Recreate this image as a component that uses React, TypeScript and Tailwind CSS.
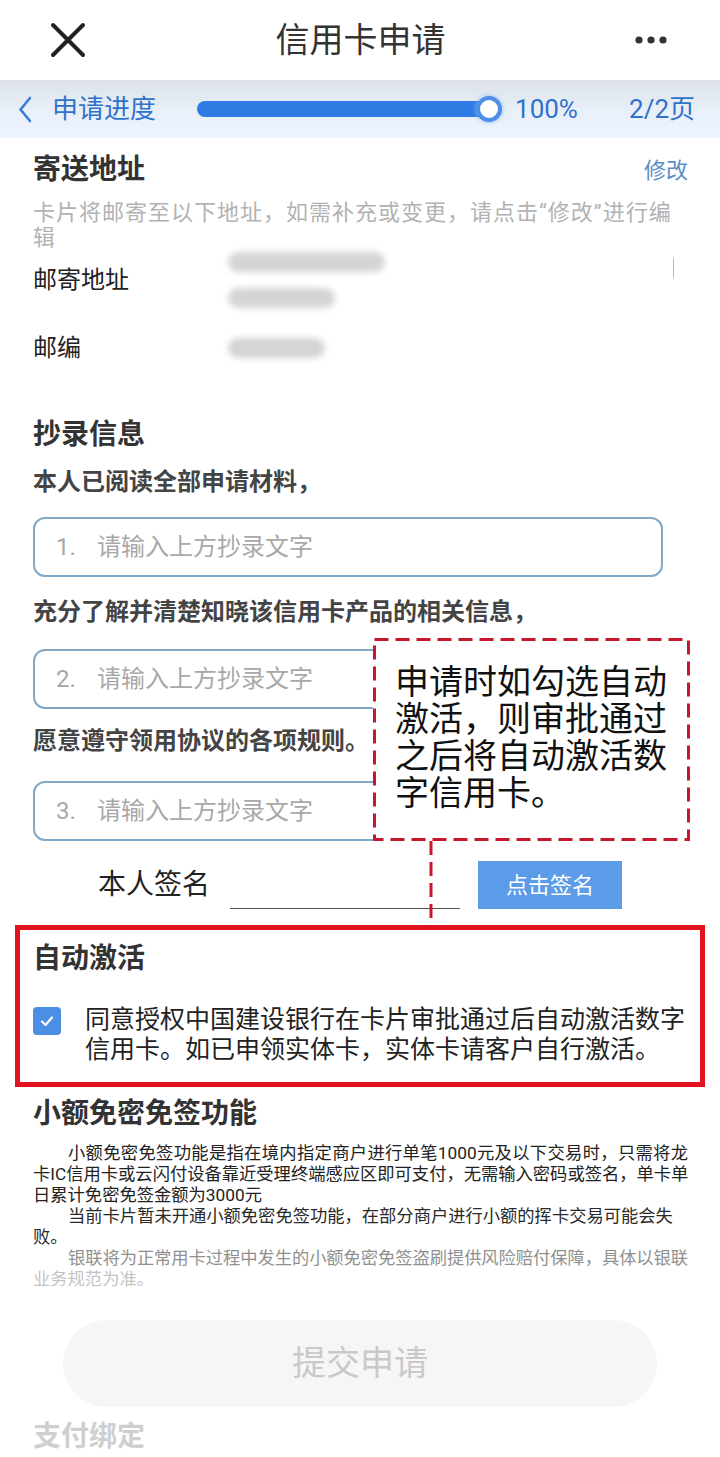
import React from "react";

const font = { fontFamily: 'Roboto, "Noto Sans CJK SC", sans-serif' };

function Blur({ w }: { w: number }) {
  return <div className="h-[20px] rounded-full bg-[#d4d4d4] blur-[3px]" style={{ width: w }} />;
}

function CopyInput({ n }: { n: number }) {
  return (
    <div className="flex h-[60px] w-[630px] items-center rounded-[12px] border-2 border-[#7fa8c9] pl-[21px] text-[24px] text-[#a8a8a8]">
      <span className="w-[41px]">{n}.</span>
      <span>请输入上方抄录文字</span>
    </div>
  );
}

export default function App() {
  return (
    <div className="relative w-[720px] h-[1457px] overflow-hidden bg-white text-[#222]" style={font}>
      {/* header */}
      <div className="flex h-[80px] items-center justify-between px-[50px] pr-[50px]">
        <svg width="38" height="38" viewBox="0 0 38 38" className="-ml-[1px]">
          <path d="M4 4 L34 34 M34 4 L4 34" stroke="#222" strokeWidth="4" strokeLinecap="round" />
        </svg>
        <div className="text-[34px] text-[#333] leading-none">信用卡申请</div>
        <svg width="34" height="10" viewBox="0 0 34 10" className="mr-[2px]">
          <circle cx="5" cy="5" r="3.6" fill="#333" />
          <circle cx="17" cy="5" r="3.6" fill="#333" />
          <circle cx="29" cy="5" r="3.6" fill="#333" />
        </svg>
      </div>

      {/* progress */}
      <div className="flex h-[58px] items-center bg-gradient-to-b from-[#dde2e8] via-[#e8eff8] to-[#edf4fd] pl-[18px] pr-[25px] text-[#2f72cc]">
        <svg width="14" height="27" viewBox="0 0 14 27">
          <path d="M12 2 L2.5 13.5 L12 25" stroke="#3a7bd5" strokeWidth="2.6" fill="none" strokeLinecap="round" strokeLinejoin="round" />
        </svg>
        <span className="ml-[20px] text-[26px] leading-none">申请进度</span>
        <div className="ml-[41px] flex w-[305px] items-center">
          <div className="h-[16px] flex-1 rounded-full bg-[#2f7be4]" />
          <div className="-ml-[13px] h-[26px] w-[26px] rounded-full border-[4px] border-[#4d8fe6] bg-white shadow-[0_0_4px_#8ab8f0]" />
        </div>
        <span className="ml-[13px] text-[26px] leading-none">100%</span>
        <span className="ml-auto text-[26px] leading-none">2/2页</span>
      </div>

      {/* mailing address */}
      <div className="px-[33px]">
        <div className="mt-[14px] flex h-[36px] items-center justify-between">
          <span className="text-[28px] font-bold leading-[36px] text-[#333]">寄送地址</span>
          <span className="mr-[-1px] text-[22px] text-[#5b8ec5]">修改</span>
        </div>
        <p className="mt-[12px] text-[22px] leading-[25px] tracking-[1px] text-[#b2b2b2]">
          卡片将邮寄至以下地址，如需补充或变更，请点击“修改”进行编
          <br />辑
        </p>
        <div className="mt-[2px] flex items-center">
          <span className="w-[195px] text-[24px]">邮寄地址</span>
          <div className="flex flex-col gap-[16px]">
            <Blur w={157} />
            <Blur w={107} />
          </div>
          <div className="ml-auto mr-[13px] h-[20px] w-[1px] self-start mt-[6px] bg-[#bbb]" />
        </div>
        <div className="mt-[22px] flex items-center">
          <span className="w-[195px] text-[24px]">邮编</span>
          <Blur w={97} />
        </div>

        {/* transcription */}
        <div className="mt-[51px] text-[28px] font-bold leading-[36px] text-[#333]">抄录信息</div>
        <p className="mt-[13px] text-[24px] font-bold leading-[32px] text-[#444]">本人已阅读全部申请材料，</p>
        <div className="mt-[19px]"><CopyInput n={1} /></div>
        <p className="mt-[19px] text-[24px] font-bold leading-[32px] text-[#444]">充分了解并清楚知晓该信用卡产品的相关信息，</p>
        <div className="mt-[21px]"><CopyInput n={2} /></div>
        <p className="mt-[16px] text-[24px] font-bold leading-[32px] text-[#444]">愿意遵守领用协议的各项规则。</p>
        <div className="mt-[24px]"><CopyInput n={3} /></div>

        <div className="mt-[20px] flex h-[48px] items-stretch pl-[65px]">
          <span className="self-center text-[28px] leading-none text-[#222]">本人签名</span>
          <div className="ml-[20px] w-[230px] border-b-[1.5px] border-[#555]" />
          <div className="ml-[18px] flex w-[144px] items-center justify-center bg-[#5c9be7] text-[22px] text-white">点击签名</div>
        </div>
      </div>

      {/* auto activation */}
      <div className="mx-[15px] mt-[16px] border-[5px] border-[#e3121f] pb-[17px] pl-[13px] pt-[11px]">
        <div className="text-[28px] font-bold leading-[36px] text-[#333]">自动激活</div>
        <div className="mt-[28px] flex">
          <div className="mt-[2px] flex h-[28px] w-[28px] shrink-0 items-center justify-center rounded-[4px] bg-[#4a8fe3]">
            <svg width="16" height="16" viewBox="0 0 16 16">
              <path d="M3 8.5 L6.5 12 L13 4.5" stroke="white" strokeWidth="2.2" fill="none" strokeLinecap="round" strokeLinejoin="round" />
            </svg>
          </div>
          <p className="ml-[24px] text-[25px] leading-[30px] text-[#222]">
            同意授权中国建设银行在卡片审批通过后自动激活数字信用卡。如已申领实体卡，实体卡请客户自行激活。
          </p>
        </div>
      </div>

      {/* quick pay */}
      <div className="px-[33px]">
        <div className="mt-[9px] text-[28px] font-bold leading-[36px] text-[#333]">小额免密免签功能</div>
        <div className="mt-[11px] w-[655px] whitespace-nowrap text-[17.3px] leading-[21px]">
          <div className="pl-[35px] text-[#222] [text-align-last:justify]">小额免密免签功能是指在境内指定商户进行单笔1000元及以下交易时，只需将龙</div>
          <div className="text-[#222] [text-align-last:justify]">卡IC信用卡或云闪付设备靠近受理终端感应区即可支付，无需输入密码或签名，单卡单</div>
          <div className="text-[#222]">日累计免密免签金额为3000元</div>
          <div className="pl-[35px] text-[#2a2a2a]">当前卡片暂未开通小额免密免签功能，在部分商户进行小额的挥卡交易可能会失</div>
          <div className="text-[#2a2a2a]">败。</div>
          <div className="pl-[35px] text-[#909090] tracking-[-0.1px] [text-align-last:justify]">银联将为正常用卡过程中发生的小额免密免签盗刷提供风险赔付保障，具体以银联</div>
          <div className="text-[#c4c4c4]">业务规范为准。</div>
        </div>
        <div className="mx-[30px] mt-[30px] flex h-[87px] items-center justify-center rounded-full bg-[#f6f6f6] text-[34px] text-[#c9c9c9]">
          提交申请
        </div>
        <div className="mt-[12px] text-[28px] font-bold leading-[36px] text-[#cfcfcf]">支付绑定</div>
      </div>

      {/* annotation callout */}
      <div className="absolute left-[373px] top-[638px] h-[203px] w-[317px] bg-white pl-[22px] pt-[26px]">
        <svg className="absolute left-0 top-0" width="317" height="203">
          <rect x="1.5" y="1.5" width="314" height="200" fill="none" stroke="#c8162c" strokeWidth="3" strokeDasharray="14 7" />
        </svg>
        <p className="relative w-[275px] text-[34px] leading-[37px] text-[#111]">申请时如勾选自动激活，则审批通过之后将自动激活数字信用卡。</p>
      </div>
      <svg className="absolute left-[429px] top-[841px]" width="4" height="87">
        <line x1="2" y1="0" x2="2" y2="87" stroke="#c8162c" strokeWidth="3" strokeDasharray="14 7" />
      </svg>
    </div>
  );
}
